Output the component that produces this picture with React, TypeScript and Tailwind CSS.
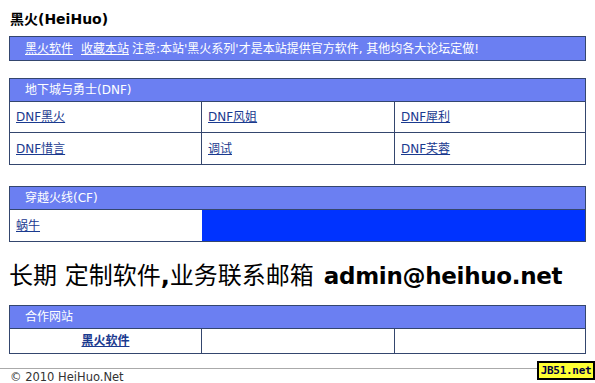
const CJK = "font-['DejaVu_Sans','Noto_Sans_CJK_SC',sans-serif]";

function Head({ title }: { title: string }) {
  return (
    <div className="h-[23px] bg-[#6b7ff2] border-b border-[#34466e] pl-[15px] flex items-center text-[12px] text-white">
      {title}
    </div>
  );
}

function Cell({ children, last, blue }: { children?: React.ReactNode; last?: boolean; blue?: boolean }) {
  return (
    <div
      className={`flex items-center pl-[6px] text-[12px] ${last ? '' : 'border-r border-[#34466e]'} ${
        blue ? 'bg-[#0033ff]' : 'bg-white'
      }`}
    >
      {children}
    </div>
  );
}

function A({ children }: { children: React.ReactNode }) {
  return <a className="text-[#1a3a8f] underline">{children}</a>;
}

export default function App() {
  return (
    <div className={`w-[595px] h-[383px] bg-white overflow-hidden relative ${CJK} text-black`}>
      <h1 className="pl-[10px] pt-[11px] text-[14px] font-bold leading-[16px]">黑火(HeiHuo)</h1>

      <div className="mx-[9px] mt-[9px] h-[25px] bg-[#6b7ff2] border border-[#34466e] flex items-center pl-[15px] text-[12px] text-white whitespace-nowrap">
        <a className="underline">黑火软件</a>
        <a className="underline ml-[8px]">收藏本站</a>
        <span className="ml-[3px]">注意:本站'黑火系列'才是本站提供官方软件, 其他均各大论坛定做!</span>
      </div>

      <div className="mx-[9px] mt-[17px] border border-[#34466e]">
        <Head title="地下城与勇士(DNF)" />
        <div className="grid grid-cols-[192px_193px_1fr] h-[31px] border-b border-[#34466e]">
          <Cell><A>DNF黑火</A></Cell>
          <Cell><A>DNF风姐</A></Cell>
          <Cell last><A>DNF犀利</A></Cell>
        </div>
        <div className="grid grid-cols-[192px_193px_1fr] h-[31px]">
          <Cell><A>DNF惜言</A></Cell>
          <Cell><A>调试</A></Cell>
          <Cell last><A>DNF芙蓉</A></Cell>
        </div>
      </div>

      <div className="mx-[9px] mt-[21px] border border-[#34466e]">
        <Head title="穿越火线(CF)" />
        <div className="grid grid-cols-[192px_1fr] h-[31px]">
          <Cell last><A>蜗牛</A></Cell>
          <Cell last blue />
        </div>
      </div>

      <div className="pl-[9px] mt-[14px] pt-[6px] h-[34px] flex items-center text-[24px] leading-none whitespace-nowrap">
        <span>长期 定制软件</span>
        <span className="font-bold">,</span>
        <span>业务联系邮箱</span>
        <span className="font-bold ml-[10px] text-[23px] tracking-[-0.3px]">admin@heihuo.net</span>
      </div>

      <div className="mx-[9px] mt-[15px] border border-[#34466e]">
        <Head title="合作网站" />
        <div className="grid grid-cols-[192px_193px_1fr] h-[24px]">
          <div className="flex items-center justify-center border-r border-[#34466e] text-[12px] font-bold">
            <A>黑火软件</A>
          </div>
          <Cell />
          <Cell last />
        </div>
      </div>

      <div className="mt-[14px] border-t border-[#aaaaaa] w-full" />
      <div className="pl-[10px] text-[11.5px] leading-[13px] mt-[2px] text-[#333]">© 2010 HeiHuo.Net</div>

      <div className="absolute left-[537px] top-[361px] w-[58px] h-[19px] bg-[#ffff33] border-2 border-black flex items-center justify-center text-[11px] leading-none font-bold text-[#000040] font-['DejaVu_Sans_Mono',monospace] tracking-[-0.3px]">
        JB51.net
      </div>
    </div>
  );
}
